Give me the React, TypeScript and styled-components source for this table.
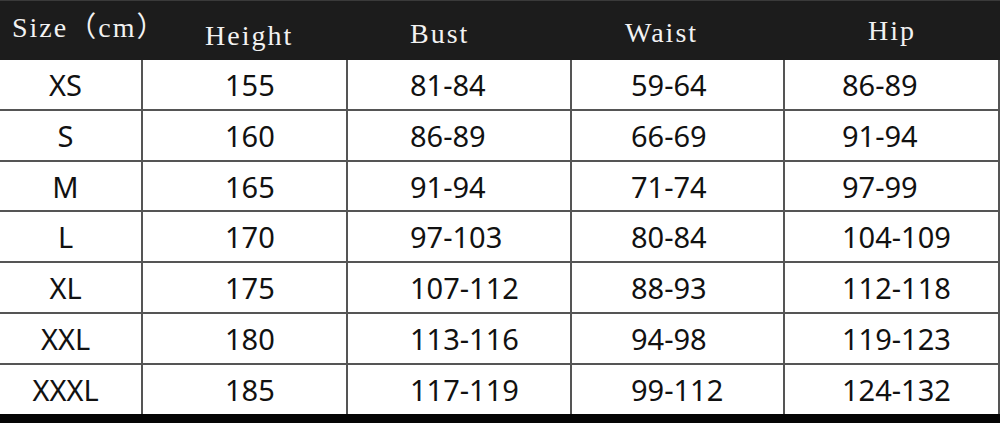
import React from "react";
import styled, { createGlobalStyle } from "styled-components";

const GlobalStyle = createGlobalStyle`
  html, body {
    margin: 0;
    padding: 0;
    background: #ffffff;
  }
`;

const rows = [
  ["XS", "155", "81-84", "59-64", "86-89"],
  ["S", "160", "86-89", "66-69", "91-94"],
  ["M", "165", "91-94", "71-74", "97-99"],
  ["L", "170", "97-103", "80-84", "104-109"],
  ["XL", "175", "107-112", "88-93", "112-118"],
  ["XXL", "180", "113-116", "94-98", "119-123"],
  ["XXXL", "185", "117-119", "99-112", "124-132"],
];

const rowHeights = [51, 51, 50, 51, 51, 51, 49];

// header text offsets, taken from the picture
const headers = [
  { text: "Size（cm）", left: 12, top: 14 },
  { text: "Height", left: 64, top: 22 },
  { text: "Bust", left: 64, top: 20 },
  { text: "Waist", left: 55, top: 19 },
  { text: "Hip", left: 85, top: 17 },
];

const bodyPad = [0, 82, 62, 59, 57];

const columns = "141px 205px 224px 213px 215px 2px";

export default function App() {
  return (
    <>
      <GlobalStyle />
      <Chart>
        <HeaderRow>
          {headers.map((h) => (
            <HeaderCell key={h.text} $left={h.left} $top={h.top}>
              {h.text}
            </HeaderCell>
          ))}
          <span />
        </HeaderRow>
        {rows.map((r, i) => (
          <Row key={r[0]} $h={rowHeights[i]} $last={i === rows.length - 1}>
            <SizeCell>{r[0]}</SizeCell>
            {r.slice(1).map((v, j) => (
              <Cell key={j} $pad={bodyPad[j + 1]}>
                {v}
              </Cell>
            ))}
            <EdgeLine />
          </Row>
        ))}
        <BottomBar />
      </Chart>
    </>
  );
}

const Chart = styled.div`
  width: 1000px;
  height: 423px;
  display: flex;
  flex-direction: column;
  overflow: hidden;
  background: #ffffff;
`;

const HeaderRow = styled.div`
  height: 60px;
  display: grid;
  grid-template-columns: ${columns};
  background: #1c1c1c;
  border-top: 1px solid #3a3a3a;
  box-sizing: border-box;
`;

const HeaderCell = styled.div<{ $left: number; $top: number }>`
  padding-left: ${(p) => p.$left}px;
  padding-top: ${(p) => p.$top - 1}px;
  font-family: "Liberation Serif", "Noto Sans CJK SC", serif;
  font-size: 28px;
  line-height: 28px;
  letter-spacing: 2px;
  color: #f2f2f2;
  white-space: nowrap;
`;

const Row = styled.div<{ $h: number; $last: boolean }>`
  height: ${(p) => p.$h}px;
  display: grid;
  grid-template-columns: ${columns};
  box-sizing: border-box;
  border-bottom: ${(p) => (p.$last ? "none" : "2px solid #555555")};
`;

const SizeCell = styled.div`
  display: flex;
  align-items: center;
  justify-content: center;
  padding-right: 10px;
  font-family: "Noto Sans", "Open Sans", sans-serif;
  font-size: 29px;
  color: #111111;
`;

const Cell = styled.div<{ $pad: number }>`
  display: flex;
  align-items: center;
  padding-left: ${(p) => p.$pad}px;
  border-left: 2px solid #555555;
  font-family: "Noto Sans", "Open Sans", sans-serif;
  font-size: 29px;
  color: #111111;
`;

const EdgeLine = styled.div`
  border-left: 2px solid #555555;
`;

const BottomBar = styled.div`
  flex: 1;
  background: #050505;
`;
